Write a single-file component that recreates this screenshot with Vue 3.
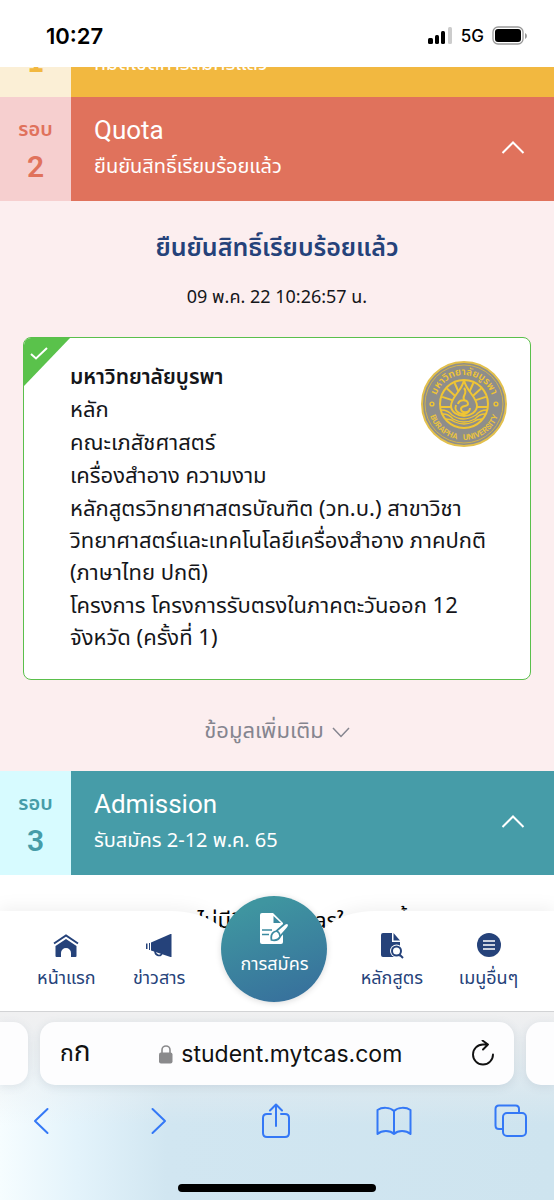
<script setup>
const programLines = [
  ['หลัก'],
  ['คณะเภสัชศาสตร์'],
  ['เครื่องสำอาง ความงาม'],
  ['หลักสูตรวิทยาศาสตรบัณฑิต (วท.บ.) สาขาวิชา', 'วิทยาศาสตร์และเทคโนโลยีเครื่องสำอาง ภาคปกติ', '(ภาษาไทย ปกติ)'],
  ['โครงการ โครงการรับตรงในภาคตะวันออก 12', 'จังหวัด (ครั้งที่ 1)']
]
const rays = [-72, -48, -24, 24, 48, 72]
</script>

<template>
  <div class="phone">
    <header class="status">
      <time class="clock">10:27</time>
      <div class="signals">
        <svg width="25" height="18" viewBox="0 0 25 18" aria-hidden="true">
          <rect x="0" y="11" width="5" height="6" rx="1.5" />
          <rect x="7" y="8" width="4" height="9" rx="1.5" />
          <rect x="13" y="4" width="4" height="13" rx="1.5" />
          <rect x="20" y="0" width="4" height="17" rx="1.5" fill="#ccc" />
        </svg>
        <span class="network">5G</span>
        <svg width="36" height="20" viewBox="0 0 36 20" aria-hidden="true">
          <rect x="1" y="1" width="30" height="17" rx="5" fill="none" stroke="#999" stroke-width="1.3" />
          <rect x="3" y="3" width="26" height="13" rx="3" />
          <path d="M33 7v6q2-1 2-3t-2-3z" fill="#999" />
        </svg>
      </div>
    </header>

    <main class="page">
      <div class="rounds">
        <section class="round portfolio">
          <div class="badge"><b>1</b></div>
          <div class="bar"><p class="note">หมดเขตการสมัครแล้ว</p></div>
        </section>

        <section class="round quota">
          <div class="badge"><span>รอบ</span><b>2</b></div>
          <button class="bar" type="button" aria-expanded="true">
            <span class="titles"><span class="name">Quota</span><span class="note">ยืนยันสิทธิ์เรียบร้อยแล้ว</span></span>
            <svg width="24" height="15" viewBox="0 0 24 15" aria-hidden="true"><path d="M1.500 13 12 2.500 22.500 13" /></svg>
          </button>
        </section>

        <section class="result">
          <h1>ยืนยันสิทธิ์เรียบร้อยแล้ว</h1>
          <p class="stamp">09 พ.ค. 22 10:26:57 น.</p>
          <article class="card">
            <div class="corner">
              <svg width="18" height="13" viewBox="0 0 18 13" aria-hidden="true"><path d="M1 7l5 4.500L17 1" /></svg>
            </div>
            <div class="details">
              <h3>มหาวิทยาลัยบูรพา</h3>
              <p v-for="(group, i) in programLines" :key="i">
                <span v-for="line in group" :key="line">{{ line }}</span>
              </p>
            </div>
            <svg class="seal" viewBox="0 0 86 86" role="img" aria-label="Burapha University">
              <defs>
                <path id="seal-top" d="M14 43a29 29 0 0 1 58 0" />
                <path id="seal-bottom" d="M7 43a36 36 0 0 0 72 0" />
              </defs>
              <circle cx="43" cy="43" r="42" fill="#8e8e8b" stroke="#e3c04c" stroke-width="2" />
              <circle cx="43" cy="43" r="39" fill="none" stroke="#d3b44c" stroke-width="1" />
              <g fill="none" stroke="#f0c534">
                <circle cx="43" cy="43" r="24" stroke-width="2" />
                <path v-for="a in rays" :key="a" d="M43 33V20" stroke-width="2" :transform="`rotate(${a} 43 43)`" />
                <path d="M20 46h13M53 46h13" stroke-width="2" />
                <path d="M43 19c-2 11-13 17-13 26 0 6 7 10 13 10s13-4 13-10c0-9-11-15-13-26z" fill="#8e8e8b" stroke-width="2" />
                <path d="M43 27c5 6-4 8 1 13M37 43c1-5 10-5 10 0 0 3-7 1-7 5 0 5 9 4 9-1M35 44c-3 8 8 12 13 6" stroke-width="2" />
                <path d="M20 49q7 0 11 5 11 8 24 0 4-5 11-5M22 53q6 0 10 5 11 6 22 0 4-5 10-5M25 58q5 0 9 3 9 4 18 0 4-3 9-3" stroke-width="1.300" />
                <circle cx="11" cy="43" r="1.900" stroke-width="1.400" /><circle cx="75" cy="43" r="1.900" stroke-width="1.400" />
              </g>
              <text class="seal-thai"><textPath href="#seal-top" startOffset="50%" text-anchor="middle">มหาวิทยาลัยบูรพา</textPath></text>
              <text class="seal-latin"><textPath href="#seal-bottom" startOffset="50%" text-anchor="middle">BURAPHA&#160;&#160; UNIVERSITY</textPath></text>
            </svg>
          </article>
          <button class="more" type="button">
            ข้อมูลเพิ่มเติม
            <svg width="18" height="11" viewBox="0 0 18 11" aria-hidden="true"><path d="M1 1l8 8.500L17 1" /></svg>
          </button>
        </section>

        <section class="round admission">
          <div class="badge"><span>รอบ</span><b>3</b></div>
          <button class="bar" type="button" aria-expanded="true">
            <span class="titles"><span class="name">Admission</span><span class="note">รับสมัคร 2-12 พ.ค. 65</span></span>
            <svg width="24" height="15" viewBox="0 0 24 15" aria-hidden="true"><path d="M1.500 13 12 2.500 22.500 13" /></svg>
          </button>
        </section>
        <p class="notice">สมัครไม่มีสิทธิ์ใช้ Tcasในรอบนี้</p>
      </div>

      <nav class="tabs">
        <div class="tabs-back" aria-hidden="true">
          <i></i>
          <svg width="208" height="100" viewBox="0 0 208 100"><path d="M0 0C24 0 42 6 56 20C68 60 81 92 104 92S140 60 152 20C166 6 184 0 208 0V100H0z" fill="#fff" /></svg>
          <i></i>
        </div>
        <a href="#home" class="tab">
          <svg width="26" height="24" viewBox="0 0 26 24" aria-hidden="true">
            <path d="M1 9.500 13 1.500 25 9.500" fill="none" stroke="#25427a" stroke-width="2" />
            <path d="M13 5 23.500 12v10q0 1-1 1h-4.500v-4a5 5 0 0 0-10 0v4H3.500q-1 0-1-1V12z" fill="#25427a" />
          </svg>
          <span>หน้าแรก</span>
        </a>
        <a href="#news" class="tab">
          <svg width="26" height="24" viewBox="0 0 26 24" aria-hidden="true" fill="#25427a">
            <path d="M25.500 0v23h-1L5 16.500V8.500L24.500 0z" /><path d="M3 9h1v7H3zM0 9.500h1.500v5.500H0z" />
            <path d="M9 17c0 5 6 6 7 2" fill="none" stroke="#25427a" stroke-width="1.600" />
          </svg>
          <span>ข่าวสาร</span>
        </a>
        <a href="#apply" class="apply">
          <svg width="32" height="33" viewBox="0 0 32 33" aria-hidden="true">
            <path d="M4 1h11l10 10v19q0 2-2 2H4q-2 0-2-2V3q0-2 2-2z" fill="#fff" />
            <path d="M15.500 4v7H23z" fill="#3b8aa0" />
            <path d="M4 18h10M4 22.500h7" stroke="#3b8aa0" stroke-width="1.700" />
            <path d="M13.500 28c-1-5 1-8 5-9l8-7q3-2 4 0t-1 4l-7 8c-2 4-5 5-9 4z" fill="#fff" stroke="#3b8aa0" stroke-width="1.800" />
            <path d="M18.500 19q3 1 3.500 5" fill="none" stroke="#3b8aa0" stroke-width="1.500" />
          </svg>
          <span>การสมัคร</span>
        </a>
        <a href="#courses" class="tab">
          <svg width="26" height="26" viewBox="0 0 26 26" aria-hidden="true">
            <path d="M4 0h9v9h8v15H4q-2 0-2-2V2q0-2 2-2z" fill="#25427a" /><path d="M14.500 0 21 7.500h-6.500z" fill="#25427a" />
            <circle cx="17.500" cy="18" r="6.500" fill="#fff" /><circle cx="17.500" cy="18" r="4.500" fill="#fff" stroke="#25427a" stroke-width="2" />
            <path d="M20.500 21.500 24 25" stroke="#25427a" stroke-width="2" />
          </svg>
          <span>หลักสูตร</span>
        </a>
        <a href="#menu" class="tab">
          <svg width="26" height="26" viewBox="0 0 26 26" aria-hidden="true">
            <circle cx="13" cy="12" r="12" fill="#25427a" /><path d="M7 8h12M7 12h12M7 16h12" stroke="#fff" stroke-width="1.600" />
          </svg>
          <span>เมนูอื่นๆ</span>
        </a>
      </nav>
    </main>

    <footer class="browser">
      <div class="address-row">
        <div class="peek left"></div>
        <div class="address">
          <button class="reader" type="button" aria-label="ขนาดข้อความ"><small>ก</small>ก</button>
          <a class="url" href="#address">
            <svg width="14" height="20" viewBox="0 0 14 20" aria-hidden="true">
              <path d="M3 10V6a4 4 0 0 1 8 0v4" fill="none" stroke="#8a8a8c" stroke-width="1.600" /><rect x="0" y="8.500" width="13.500" height="11" rx="2" fill="#8a8a8c" />
            </svg>
            student.mytcas.com
          </a>
          <button class="reload" type="button" aria-label="โหลดใหม่">
            <svg width="24" height="28" viewBox="0 0 24 28"><path d="M22 14.500A10 10 0 1 1 12 4.500h5M11.500 0.500l5.500 4-5 5" fill="none" stroke="#111" stroke-width="1.900" stroke-linecap="round" stroke-linejoin="round" /></svg>
          </button>
        </div>
        <div class="peek right"></div>
      </div>
      <div class="toolbar">
        <button type="button" aria-label="ย้อนกลับ"><svg width="16" height="28" viewBox="0 0 16 28"><path d="M14.500 2 2 14l12.500 12" /></svg></button>
        <button type="button" aria-label="ไปข้างหน้า"><svg width="16" height="28" viewBox="0 0 16 28"><path d="M1.500 2 14 14 1.500 26" /></svg></button>
        <button type="button" aria-label="แชร์"><svg width="28" height="36" viewBox="0 0 28 36"><path d="M9 11H5q-4 0-4 4v15q0 4 4 4h18q4 0 4-4V15q0-4-4-4h-4M14 23V2M8 7.500 14 1.500l6 6" /></svg></button>
        <button type="button" aria-label="บุ๊กมาร์ก"><svg width="36" height="30" viewBox="0 0 36 30"><path d="M18 5v23M18 5C14 1 6 1 1.500 4v24C6 24 14 24 18 28c4-4 12-4 16.500 0V4C30 1 22 1 18 5z" /></svg></button>
        <button type="button" aria-label="แท็บ"><svg width="34" height="34" viewBox="0 0 34 34"><path d="M9 25H5q-3.500 0-3.500-3.500V5Q1.500 1.500 5 1.500h16.500q3.500 0 3.500 3.500v3.500" /><rect x="9" y="9" width="23" height="23" rx="4" /></svg></button>
      </div>
      <div class="home-bar"></div>
    </footer>
  </div>
</template>

<style>
body { margin: 0; }
</style>

<style scoped>
* { box-sizing: border-box; }
h1, h3, p { margin: 0; }
button { border: 0; padding: 0; background: none; font: inherit; color: inherit; }
a { color: inherit; text-decoration: none; }
svg { display: block; flex: none; }
.phone { min-height: 100vh; display: flex; flex-direction: column; background: #fff; color: #15161a; font-family: "Noto Sans Thai", "Sarabun", "Open Sans", sans-serif; font-size: 22px; overflow: hidden; }
.status { height: 67px; display: flex; justify-content: space-between; align-items: center; padding: 4px 26px 0 46px; flex: none; background: #fff; font-family: Inter, sans-serif; color: #000; }
.clock { font-size: 22px; font-weight: 600; }
.signals { display: flex; align-items: center; gap: 8px; }
.network { font-size: 17px; font-weight: 500; }
.page { position: relative; flex: 1; overflow: hidden; display: flex; flex-direction: column; }
.rounds { flex: 1; }
.round { display: flex; height: 104px; }
.badge { width: 71px; display: flex; flex-direction: column; align-items: center; padding-top: 15px; font-weight: 600; }
.badge span { font-size: 20px; line-height: 36px; }
.badge b { font-family: Roboto, sans-serif; font-size: 30px; line-height: 38px; font-weight: 600; }
.bar { flex: 1; display: flex; align-items: center; justify-content: space-between; padding: 0 29px 3px 23px; color: #fff; text-align: left; }
.bar svg { fill: none; stroke: #fff; stroke-width: 2; }
.titles { display: flex; flex-direction: column; white-space: nowrap; }
.name { font-family: Roboto, sans-serif; font-size: 26px; font-weight: 400; line-height: 38px; }
.note { font-size: 20px; line-height: 36px; white-space: nowrap; }
.round.portfolio { height: 30px; overflow: hidden; align-items: stretch; }
.portfolio .badge { background: #fbefd6; color: #f2b840; justify-content: flex-end; padding: 0 0 15px; }
.portfolio .badge b { font-family: "DejaVu Sans Condensed", "DejaVu Sans", sans-serif; font-size: 28px; }
.portfolio .bar { background: #f2b840; align-items: flex-end; padding-bottom: 15px; }
.quota .badge { background: #f6cfcf; color: #e0725c; }
.quota .bar { background: #e0725c; }
.admission .badge { background: #d7fbff; color: #469ca8; }
.admission .bar { background: #469ca8; }
.result { background: #fceeef; padding: 26px 23px 21px; display: flex; flex-direction: column; align-items: center; }
h1 { font-size: 25px; line-height: 42px; font-weight: 600; color: #25427a; white-space: nowrap; }
.stamp { font-family: "Noto Sans", "Noto Sans Thai", sans-serif; font-size: 18px; line-height: 28px; margin: 13px 0 27px; }
.card { position: relative; width: 100%; min-height: 343px; background: #fff; border: 1px solid #5abf4b; border-radius: 8px; padding: 24px 23px 23px 46px; display: flex; overflow: hidden; }
.corner { position: absolute; left: 0; top: 0; width: 46px; height: 48px; padding: 9px 6px; background: #5ac24b; clip-path: polygon(0 0, 100% 0, 0 100%); }
.corner svg { fill: none; stroke: #fff; stroke-width: 2; }
.details { display: flex; flex-direction: column; gap: 1px; line-height: 32px; font-size: 22px; white-space: nowrap; }
.details h3 { font-size: 21px; font-weight: 600; }
.details span { display: block; }
.seal { position: absolute; right: 23px; top: 23px; width: 86px; height: 86px; }
.seal-thai { font-size: 10px; font-weight: 600; fill: #f0c534; }
.seal-latin { font-family: Roboto, sans-serif; font-size: 8px; font-weight: 700; fill: #e8c23f; }
.more { display: flex; align-items: center; gap: 8px; margin-top: 34px; line-height: 36px; font-size: 22px; color: #85858f; }
.more svg { fill: none; stroke: #85858f; stroke-width: 1.500; }
.notice { padding: 29px 24px 0; text-align: center; font-size: 22px; line-height: 36px; color: #000; }
.tabs { position: absolute; left: 0; right: 0; bottom: 0; height: 100px; display: grid; grid-template-columns: 20px 92fr 92fr 138px 96fr 96fr 17px; color: #25427a; }
.tabs-back { position: absolute; inset: 0; display: flex; filter: drop-shadow(0 -3px 8px rgba(0, 0, 0, 0.06)); }
.tabs-back i { flex: 169; background: #fff; }
.tabs-back svg + i { flex: 177; }
.tab { position: relative; display: flex; flex-direction: column; align-items: center; padding-top: 22px; white-space: nowrap; }
.tab svg { height: 26px; }
.tab span { font-size: 18px; line-height: 36px; margin-top: 2px; }
.tab:nth-child(2) { grid-column: 2; }
.apply { position: relative; justify-self: center; margin-top: -15px; width: 106px; height: 106px; border-radius: 50%; background: linear-gradient(160deg, #3f95a0 15%, #376f9c 95%); color: #fff; display: flex; flex-direction: column; align-items: center; padding-top: 16px; box-shadow: 0 1px 6px rgba(0, 0, 0, 0.15); white-space: nowrap; }
.apply span { font-size: 18px; line-height: 36px; margin-top: 2px; }
.browser { position: relative; flex: none; height: 189px; border-top: 1px solid #d2d3d5; background: linear-gradient(180deg, #f0f0f1 0, rgba(236, 238, 240, 0.8) 20%, rgba(225, 233, 238, 0) 60%), linear-gradient(90deg, #f6fdff 0, #e3f3fb 14%, #d1e6f1 30%, #cee4ef 100%); font-family: Inter, sans-serif; overflow: hidden; }
.address-row { display: flex; gap: 12px; padding-top: 10px; }
.peek { height: 63px; background: #fdfdfe; box-shadow: 0 2px 10px rgba(80, 100, 120, 0.12); }
.left { width: 28px; border-radius: 0 15px 15px 0; }
.right { width: 28px; border-radius: 15px 0 0 15px; }
.address { flex: 1; height: 63px; background: #fdfdfe; border-radius: 15px; box-shadow: 0 2px 10px rgba(80, 100, 120, 0.14); display: flex; align-items: center; justify-content: space-between; padding: 0 19px 0 20px; color: #111; }
.reader { font-family: "Noto Sans Thai", sans-serif; font-size: 28px; line-height: 36px; }
.reader small { font-size: 23px; }
.url { display: flex; align-items: center; gap: 8px; font-size: 23px; }
.toolbar { display: flex; justify-content: space-between; align-items: center; height: 72px; padding: 0 25px 0 23px; }
.toolbar button { width: 36px; display: flex; justify-content: center; }
.toolbar svg { fill: none; stroke: #3478f6; stroke-width: 2; stroke-linecap: round; stroke-linejoin: round; }
.home-bar { width: 198px; height: 8px; border-radius: 4px; background: #000; margin: 27px auto 0; }
</style>
